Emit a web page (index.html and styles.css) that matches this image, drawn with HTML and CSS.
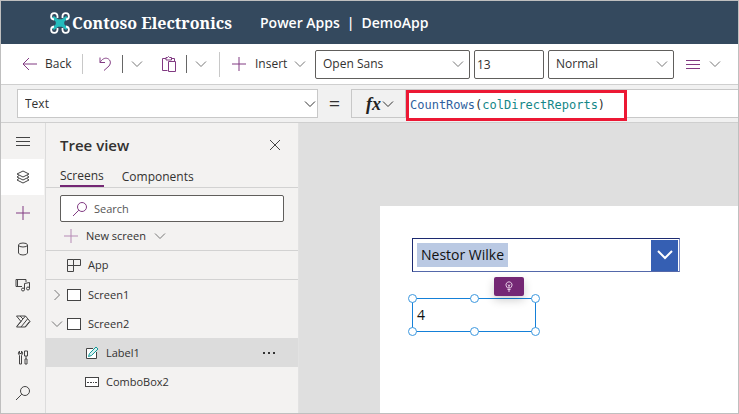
FILE: index.html
```html
<!DOCTYPE html>
<html lang="en">
<head>
<meta charset="utf-8">
<title>Power Apps | DemoApp</title>
<meta name="viewport" content="width=device-width, initial-scale=1">
<link rel="stylesheet" href="styles.css">
</head>
<body>
<svg class="defs" aria-hidden="true">
  <symbol id="chevron" viewBox="0 0 12 12"><path d="M1 3.5 6 8.5 11 3.5"/></symbol>
  <symbol id="plus" viewBox="0 0 14 14"><path d="M7 0V14M0 7H14"/></symbol>
  <symbol id="magnifier" viewBox="0 0 16 16"><circle cx="10" cy="6" r="4.5"/><path d="M6.8 9.2 1 15"/></symbol>
  <symbol id="screen" viewBox="0 0 14 12"><rect x=".5" y=".5" width="13" height="11" fill="#fff"/></symbol>
</svg>
<div class="app">
  <header class="header">
    <button class="waffle" aria-label="App launcher">
      <svg width="14" height="14" viewBox="0 0 14 14" fill="#fff"><path d="M0 0h3v3H0zM5.500 0h3v3h-3zM11 0h3v3h-3zM0 5.500h3v3H0zM5.500 5.500h3v3h-3zM11 5.500h3v3h-3zM0 11h3v3H0zM5.500 11h3v3h-3zM11 11h3v3h-3z"/></svg>
    </button>
    <svg class="drone" width="20" height="22" viewBox="0 0 20 22" fill="none">
      <path d="M4 5 8 8H12L16 5 17 6 13.500 9.500V12.500L17 16 16 17 12 14H8L4 17 3 16 6.500 12.500V9.500L3 6Z" fill="#25bcbd" stroke="#25bcbd" stroke-width="1.500"/>
      <path d="M4 7.500A3.200 3.200 0 1 1 7.500 4V6M12.500 6V4A3.200 3.200 0 1 1 16 7.500M7.500 16V18A3.200 3.200 0 1 1 4 14.500M16 14.500A3.200 3.200 0 1 1 12.500 18V16" stroke="#fff" stroke-width="1.800"/>
    </svg>
    <span class="brand">Contoso Electronics</span>
    <span class="product"><span>Power Apps</span><span>|</span><span>DemoApp</span></span>
  </header>

  <div class="toolbar" role="toolbar" aria-label="Commands">
    <button class="tool back"><svg class="purple" width="15" height="14" viewBox="0 0 15 14"><path d="M7 1 1 7 7 13M1 7H15"/></svg>Back</button>
    <span class="rule"></span>
    <button class="tool icon-tool" aria-label="Undo"><svg class="purple" width="12" height="14" viewBox="0 0 12 14"><path d="M1 .5V5.500H6M1 5.500C3 2 6 .5 8.500 1.500C12 3 12 6.500 10 9L5 13.500"/></svg></button>
    <span class="rule dark"></span>
    <button class="tool drop" aria-label="Undo options"><svg class="chev"><use href="#chevron"/></svg></button>
    <button class="tool paste" aria-label="Paste"><svg class="purple" width="14" height="16" viewBox="0 0 14 16"><path d="M4 2.500H.5V14.500H5.500M10 2.500H12.500V5M4 4V1.500H5.500Q6.500-.5 7.500 1.500H9.500V4ZM6.500 5.500H13.500V15.500H6.500Z"/></svg></button>
    <span class="rule dark"></span>
    <button class="tool drop" aria-label="Paste options"><svg class="chev"><use href="#chevron"/></svg></button>
    <span class="rule tall"></span>
    <button class="tool insert"><svg class="purple" width="14" height="14"><use href="#plus"/></svg><span>Insert</span><svg class="chev"><use href="#chevron"/></svg></button>
    <label class="picker font"><select aria-label="Font"><option>Open Sans</option></select><svg class="chev"><use href="#chevron"/></svg></label>
    <input class="size" type="text" value="13" aria-label="Font size">
    <label class="picker weight"><select aria-label="Font weight"><option>Normal</option></select><svg class="chev"><use href="#chevron"/></svg></label>
    <button class="tool align" aria-label="Align"><svg class="purple" width="14" height="11" viewBox="0 0 14 11"><path d="M0 1.500H14M0 5.500H14M0 9.500H14"/></svg><svg class="chev"><use href="#chevron"/></svg></button>
  </div>

  <div class="formula-bar">
    <label class="picker property"><select aria-label="Property"><option>Text</option></select><svg class="chev ink"><use href="#chevron"/></svg></label>
    <span class="equals">=</span>
    <button class="fx" aria-label="Functions"><i>fx</i><svg class="chev ink"><use href="#chevron"/></svg></button>
    <div class="formula">
      <div class="code" role="textbox" aria-label="Formula" contenteditable="true" spellcheck="false"><span class="fn">CountRows</span>(<span class="var">colDirectReports</span>)</div>
    </div>
  </div>

  <div class="workspace">
    <nav class="rail" aria-label="Authoring">
      <button aria-label="Menu"><svg width="14" height="11" viewBox="0 0 14 11"><path d="M0 1.500H14M0 5.500H14M0 9.500H14"/></svg></button>
      <button class="active" aria-label="Tree view"><svg width="14" height="14" viewBox="0 0 14 14"><path d="M7 1 13 4 7 7 1 4ZM3 5.500 1 7 7 10 13 7 11 5.500M3 8.500 1 10 7 13 13 10 11 8.500"/></svg></button>
      <button aria-label="Insert"><svg class="purple" width="14" height="14"><use href="#plus"/></svg></button>
      <button aria-label="Data"><svg width="12" height="14" viewBox="0 0 12 14"><ellipse cx="6" cy="3" rx="4.500" ry="2"/><path d="M1.500 3V11Q2 13 6 13T10.500 11V3"/></svg></button>
      <button aria-label="Media"><svg width="16" height="14" viewBox="0 0 16 14"><path d="M7 8.500H1V1.500H11V4M2.500 1.500V8.500M9.500 11.500V5.500L14.500 4.500V10.500"/><circle cx="8" cy="11.500" r="1.500"/><circle cx="13" cy="10.500" r="1.500"/></svg></button>
      <button aria-label="Flows"><svg width="16" height="13" viewBox="0 0 16 13"><path d="M1.500 1H10.500L15 6.500 10.500 12H1.500L6 6.500ZM5 1 8 4M2 11 10.500 1M6 12 12.500 4M10 12 14.500 6.500"/></svg></button>
      <button aria-label="Tools"><svg width="12" height="15" viewBox="0 0 12 15"><path d="M2.500 1Q0 3 2.500 5.500V14H4.500V5.500Q7 3 4.500 1V3.500H2.500ZM7.500 1H10.500V6H7.500ZM9 6V9M8 9H10V14H8Z"/></svg></button>
      <button aria-label="Search"><svg width="16" height="16"><use href="#magnifier"/></svg></button>
    </nav>

    <aside class="panel">
      <div class="panel-head"><h2>Tree view</h2><button aria-label="Close"><svg width="12" height="12" viewBox="0 0 12 12"><path d="M1 1 11 11M11 1 1 11"/></svg></button></div>
      <div class="tabs" role="tablist"><button class="selected" role="tab">Screens</button><button role="tab">Components</button></div>
      <label class="search"><svg class="purple" width="16" height="16"><use href="#magnifier"/></svg><input type="text" placeholder="Search" aria-label="Search"></label>
      <button class="new-screen"><svg class="purple" width="14" height="14"><use href="#plus"/></svg>New screen<svg class="chev"><use href="#chevron"/></svg></button>
      <ul class="tree">
        <li class="row ruled"><span class="twist"></span><svg width="14" height="14" viewBox="0 0 14 14"><path d="M.5 1.500H6.500V7.500H.5ZM6.500 1.500H13.500V7.500H6.500ZM.5 7.500H6.500V13.500H.5Z"/></svg><span>App</span></li>
        <li class="row"><svg class="chev twist closed"><use href="#chevron"/></svg><svg width="14" height="12"><use href="#screen"/></svg><span>Screen1</span></li>
        <li class="row"><svg class="chev twist"><use href="#chevron"/></svg><svg width="14" height="12"><use href="#screen"/></svg><span>Screen2</span></li>
        <li class="row child current"><svg width="14" height="14" viewBox="0 0 14 14"><path d="M8 2.500H1.500V12.500H11.500V6" fill="#fff"/><path class="teal" d="M3.500 10.500 4.500 7.500 11 1 13 3 6.500 9.500Z"/></svg><span>Label1</span><button class="more" aria-label="More"><svg width="14" height="4" viewBox="0 0 14 4"><path d="M1 1h2v2H1zM6 1h2v2H6zM11 1h2v2h-2z" fill="#333" stroke="none"/></svg></button></li>
        <li class="row child"><svg width="14" height="10" viewBox="0 0 14 10"><rect x=".5" y=".5" width="13" height="9" fill="#fff"/><path d="M2 5.500H4M5 5.500H7M8 5.500H9M10 5.500H12"/></svg><span>ComboBox2</span></li>
      </ul>
    </aside>

    <main class="canvas">
      <div class="artboard">
        <div class="combo"><span class="chip">Nestor Wilke</span><button aria-label="Open list"><svg width="18" height="12" viewBox="0 0 18 12"><path d="M2 2 9 9 16 2"/></svg></button></div>
        <div class="label-control">4
          <span class="handle n w"></span><span class="handle n c"></span><span class="handle n e"></span>
          <span class="handle s w"></span><span class="handle s c"></span><span class="handle s e"></span>
          <button class="hint" aria-label="Ideas"><svg width="8" height="11" viewBox="0 0 8 11"><path d="M2.500 7Q.5 5 1 3Q2 .8 4 .8T7 3Q7.500 5 5.500 7ZM2.500 8.500H5.500M3 10H5M3 3.500 4 5 5 3.500M4 5V7"/></svg></button>
        </div>
      </div>
    </main>
  </div>
</div>
</body>
</html>
```
FILE: styles.css
```css
* { box-sizing: border-box; }

body {
  margin: 0;
  font: 12px/16px "Open Sans", "Noto Sans", sans-serif;
  color: #323130;
}

button, input, select {
  font: inherit;
  color: inherit;
  margin: 0;
  padding: 0;
  border: 0;
  border-radius: 0;
  background: none;
  appearance: none;
}

button {
  display: flex;
  align-items: center;
  white-space: nowrap;
}

svg {
  flex: none;
  fill: none;
  stroke: #444;
  stroke-width: 1;
}

.defs { position: absolute; width: 0; height: 0; }
.purple { stroke: #813a82; }
.chev { width: 12px; height: 12px; stroke: #777; }
.chev.ink { stroke: #333; }

.app {
  display: flex;
  flex-direction: column;
  min-height: 100vh;
  border: 1px solid #bfbfbf;
  overflow: hidden;
}

.header {
  display: flex;
  align-items: center;
  height: 43px;
  padding-left: 14px;
  background: #34495e;
  color: #fff;
  white-space: nowrap;
}
.header svg { stroke: none; }
.drone { margin: 0 2px 0 21px; }
.brand {
  width: 188px;
  font: bold 16px/24px "Noto Serif", "DejaVu Serif Condensed", "DejaVu Serif", serif;
}
.product { display: flex; gap: 7px; font-size: 14px; font-weight: 600; }

.toolbar {
  display: flex;
  align-items: center;
  height: 41px;
  padding-left: 21px;
  background: #fff;
  border-bottom: 1px solid #cfcfcf;
}
.toolbar > * { flex: none; }
.tool { height: 29px; }
.back { gap: 8px; width: 60px; }
.rule { width: 1px; height: 20px; background: #c8c8c8; }
.rule.dark { height: 18px; background: #666; }
.rule.tall { height: 25px; }
.icon-tool { width: 39px; padding-left: 16px; }
.drop { width: 32px; padding-left: 8px; }
.paste { width: 31px; padding-left: 7px; }
.insert { gap: 9px; width: 95px; padding-left: 12px; }
.insert span { width: 30px; }
.align { gap: 9px; padding-left: 12px; }

.picker { display: grid; align-items: center; }
.picker > * { grid-area: 1 / 1; }
.picker select { width: 100%; height: 29px; padding-left: 7px; border: 1px solid #605e5c; background: #fff; border-radius: 2px; }
.picker .chev { justify-self: end; margin-right: 6px; pointer-events: none; }
.font { width: 155px; }
.weight { width: 126px; }
.size { width: 70px; height: 29px; margin: 0 4px; padding-left: 2px; border: 1px solid #605e5c; border-radius: 2px; }

.formula-bar {
  display: flex;
  align-items: center;
  height: 38px;
  padding-left: 16px;
  background: #f1f1f1;
  border-bottom: 1px solid #cfcfcf;
}
.property { flex: none; width: 301px; }
.property select { border-color: #c8c8c8; border-radius: 0; }
.property .chev { margin-right: 2px; }
.equals { width: 33px; text-align: center; font-size: 20px; line-height: 24px; }
.fx {
  flex: none;
  gap: 2px;
  width: 55px;
  height: 29px;
  padding-left: 14px;
  border: 1px solid #c8c8c8;
}
.fx i { width: 14px; font: italic bold 18px/24px "Liberation Serif", serif; color: #222; }
.formula { flex: 1; display: flex; height: 29px; background: #fff; border: solid #c8c8c8; border-width: 1px 0; }
.code {
  width: 221px;
  height: 31px;
  padding: 1px;
  border: 3px solid #ec1834;
  background: #fff;
  font: 12px/22px "DejaVu Sans Mono", monospace;
  white-space: nowrap;
}
.fn { color: #2f5f9e; }
.var { color: #138787; }

.workspace { flex: 1; display: flex; }

.rail { flex: none; width: 45px; background: #f3f2f1; border-right: 1px solid #dcdcdc; padding-right: 1px; }
.rail button { width: 100%; height: 36px; justify-content: center; }
.rail .active { background: #fff; }

.panel { flex: none; width: 253px; background: #f3f2f1; border-right: 1px solid #e2e2e2; }
.panel-head { display: flex; align-items: center; justify-content: space-between; height: 44px; padding: 0 17px 0 14px; }
.panel-head h2 { margin: 0; font-size: 15px; font-weight: 600; line-height: 20px; }
.tabs { display: flex; gap: 18px; height: 21px; padding-left: 14px; border-bottom: 1px solid #d2d2d2; }
.tabs button { height: 20px; }
.tabs .selected { border-bottom: 2px solid #742774; }
.search { display: flex; align-items: center; gap: 6px; height: 27px; margin: 7px 14px 0; padding-left: 11px; background: #fff; border: 1px solid #605e5c; border-radius: 2px; font-size: 11px; }
.search input { flex: 1; min-width: 0; }
.search input::placeholder { color: #555; opacity: 1; }
.new-screen { gap: 8px; width: 100%; height: 29px; padding-left: 18px; border-bottom: 1px solid #d2d2d2; font-size: 11px; }
.new-screen .purple { stroke: #b58ab5; }

.tree { margin: 0; padding: 0; list-style: none; font-size: 11px; }
.row { display: flex; align-items: center; height: 29px; padding-left: 5px; }
.row > span:not(.twist) { margin-left: 7px; }
.row.ruled { border-bottom: 1px solid #d2d2d2; }
.twist { width: 12px; margin-right: 4px; }
.closed { transform: rotate(-90deg); }
.child { padding-left: 39px; }
.current { background: #dcdcdc; }
.teal { stroke: #159a9a; fill: #d7f0ef; }
.more { margin: 0 22px 0 auto; }

.canvas { flex: 1; display: flex; padding: 83px 0 0 81px; background: #dfdfdf; }
.artboard { flex: 1; min-width: 0; padding: 32px; background: #fff; }
.combo { display: flex; align-items: center; justify-content: space-between; width: 268px; height: 34px; padding-left: 4px; border: 1px solid #1c2a70; border-right-color: #8190c5; border-bottom-color: #5468aa; font-size: 14px; line-height: 24px; color: #111; }
.chip { padding: 0 4px; background: #bac9e3; }
.combo button { width: 27px; height: 31px; margin-right: 1px; justify-content: center; background: #355fb3; }
.combo button svg { stroke: #fff; stroke-width: 2; }
.label-control { position: relative; width: 124px; height: 34px; margin-top: 26px; padding-left: 4px; border: 1px solid #1580d8; font-size: 14px; line-height: 32px; color: #111; }
.handle { position: absolute; width: 9px; height: 9px; border: 1px solid #3c98df; border-radius: 50%; background: #fff; }
.n { top: -5px; }
.s { bottom: -5px; }
.w { left: -5px; }
.c { left: calc(50% - 4px); }
.e { right: -5px; }
.hint { position: absolute; top: -22px; right: 11px; width: 30px; height: 19px; justify-content: center; background: #742774; border-radius: 2px; box-shadow: 0 4px 10px #0003; }
.hint svg { stroke: #e5cce5; }
```
